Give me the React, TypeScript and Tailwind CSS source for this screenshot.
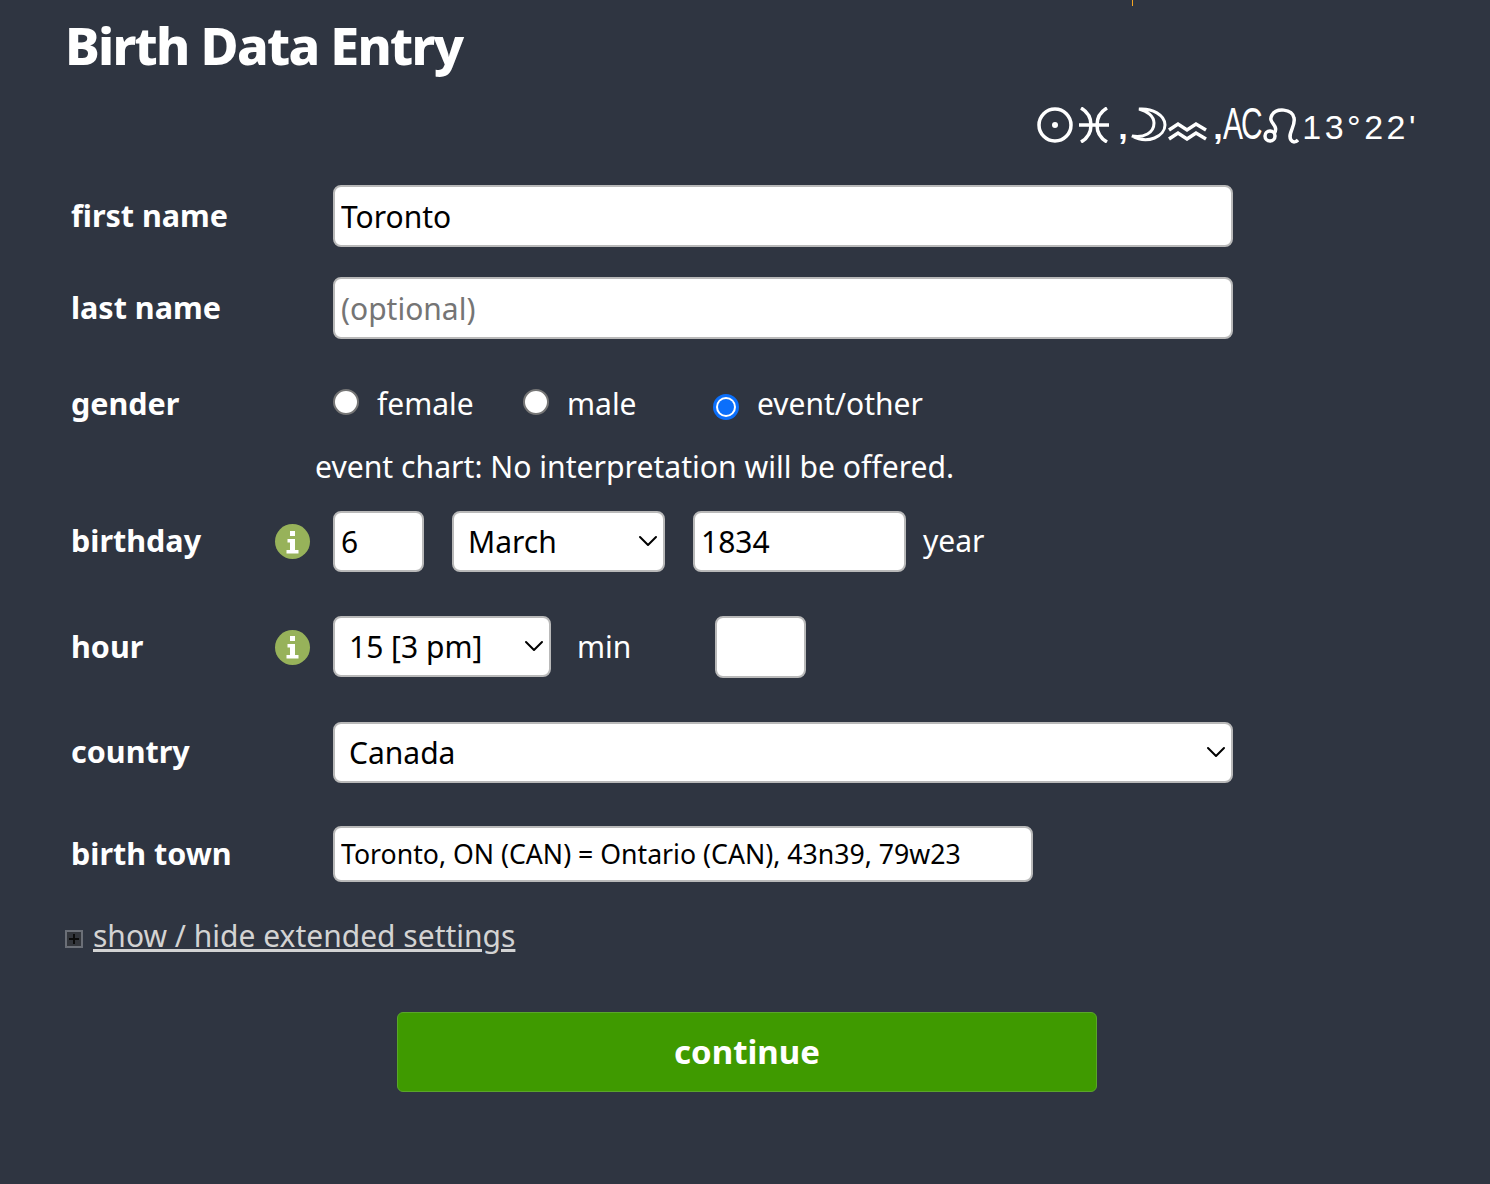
import React from 'react';
import { ChevronDown } from 'lucide-react';

const fieldClass =
  'rounded-[8px] border-2 border-[#b9b9b9] bg-white px-[6px] text-[30px] text-black outline-none placeholder:text-[#757575]';
const selectClass =
  'h-[61px] w-full appearance-none rounded-[8px] border-2 border-[#b9b9b9] bg-white pl-[14px] text-[30px] text-black outline-none';

const Label: React.FC<{ children: React.ReactNode; info?: boolean }> = ({ children, info }) => (
  <div className="flex w-[267px] shrink-0 items-center pl-[5px]">
    <span className="mb-[2px] w-[204px] text-[30.500px] font-bold leading-none text-white">{children}</span>
    {info && (
      <span className="flex h-[35px] w-[35px] items-center justify-center rounded-full bg-[#97b25a]">
        <svg width="14" height="24" viewBox="0 0 14 24" fill="#ffffff">
          <rect x="4" y="1" width="5" height="5" />
          <path d="M1.500 9H9v11h3.500v3.500H.5V20H4v-7.500H1.500z" />
        </svg>
      </span>
    )}
  </div>
);

const Select: React.FC<{ value: string; options: string[]; className: string }> = ({ value, options, className }) => (
  <div className={`relative ${className}`}>
    <select defaultValue={value} className={selectClass}>
      {options.map((o) => (
        <option key={o}>{o}</option>
      ))}
    </select>
    <ChevronDown className="pointer-events-none absolute right-px top-[14px] text-black" size={32} strokeWidth={1.5} />
  </div>
);

const Radio: React.FC<{ label: string; checked?: boolean; className: string }> = ({ label, checked, className }) => (
  <label className={`flex items-center ${className}`}>
    {checked ? (
      <span className="mt-[5px] flex h-[26px] w-[26px] items-center justify-center rounded-full bg-[#0b6ffb]">
        <span className="flex h-[20px] w-[20px] items-center justify-center rounded-full bg-white">
          <span className="h-[16px] w-[16px] rounded-full bg-[#0b6ffb]" />
        </span>
      </span>
    ) : (
      <span className="-mt-[5px] h-[26px] w-[26px] rounded-full border-2 border-[#767676] bg-white" />
    )}
    <span className="ml-[18px] text-[30px] leading-none text-white">{label}</span>
  </label>
);

export default function App() {
  return (
    <div className="relative min-h-[1184px] bg-[#2f3541] pl-[66px] font-['Noto_Sans',sans-serif]">
      <span className="absolute left-[1132px] top-0 h-[6px] w-px bg-[#f5a623]" />
      <h1 className="-ml-px pt-[10px] text-[52px] font-extrabold leading-[70px] tracking-[-1.700px] text-white">Birth Data Entry</h1>

      {/* chart summary */}
      <div className="mt-[22px] flex h-[50px] w-[1353px] items-center justify-end text-white">
        <svg className="mb-[4px]" width="36" height="36" viewBox="0 0 36 36" fill="none" stroke="#ffffff" strokeWidth="3.500">
          <circle cx="18" cy="18" r="16" />
          <circle cx="18" cy="18" r="3" fill="#ffffff" stroke="none" />
        </svg>
        <svg className="mb-[4px] ml-[6px]" width="30" height="36" viewBox="0 0 30 36" fill="none" stroke="#ffffff" strokeWidth="3.500">
          <path d="M2 1c7 4 10 10 10 17s-3 13-10 17M28 1c-7 4-10 10-10 17s3 13 10 17M0 18h30" />
        </svg>
        <span className="ml-[9px] w-[12px] font-['Liberation_Sans',sans-serif] text-[34px] font-bold leading-none">,</span>
        <svg className="mb-[4px]" width="37" height="37" viewBox="0 0 37 37" fill="none" stroke="#ffffff" strokeWidth="3">
          <path d="M9 2C22 1 35 8 35 18 35 29 18 38 2 29 14 31 24 26 24 16 24 9 17 4 9 2z" />
        </svg>
        <svg className="ml-px mt-[8px]" width="39" height="20" viewBox="0 0 39 20" fill="none" stroke="#ffffff" strokeWidth="3.500">
          <path d="M1 9l9-6 9 6 9-6 10 6M1 18l9-6 9 6 9-6 10 6" />
        </svg>
        <span className="ml-[6px] w-[10px] font-['Liberation_Sans',sans-serif] text-[34px] font-bold leading-none">,</span>
        <span className="mb-[6px] inline-block w-[40px] origin-left whitespace-nowrap font-['Liberation_Sans',sans-serif] text-[44px] leading-none tracking-[-3px] [transform:scaleX(0.68)]">AC</span>
        <svg className="mb-[4px]" width="36" height="37" viewBox="0 0 36 37" fill="none" stroke="#ffffff" strokeWidth="3.500">
          <circle cx="7" cy="29" r="5" />
          <path d="M11 27C17 18 4 16 9 8c4-7 20-7 22 3 2 8-7 16-3 22 2 3 5 2 7 0" />
        </svg>
        <span className="ml-[3px] font-['Liberation_Sans',sans-serif] text-[34px] leading-none tracking-[3.500px]">13°22'</span>
      </div>

      <form className="flex flex-col">
        <div className="mt-[33px] flex items-center">
          <Label>first name</Label>
          <input defaultValue="Toronto" className={`${fieldClass} h-[62px] w-[900px]`} />
        </div>

        <div className="mt-[30px] flex items-center">
          <Label>last name</Label>
          <input placeholder="(optional)" className={`${fieldClass} h-[62px] w-[900px]`} />
        </div>

        <div className="mt-[44px] flex h-[42px] items-center">
          <Label>gender</Label>
          <Radio label="female" className="w-[190px]" />
          <Radio label="male" className="w-[190px]" />
          <Radio label="event/other" checked className="w-[300px]" />
        </div>

        <p className="mt-[21px] pl-[249px] text-[30.150px] leading-[42px] text-white">
          event chart: No interpretation will be offered.
        </p>

        <div className="mt-[23px] flex items-center">
          <Label info>birthday</Label>
          <input defaultValue="6" className={`${fieldClass} h-[61px] w-[91px]`} />
          <Select value="March" options={['March']} className="ml-[28px] w-[213px]" />
          <input defaultValue="1834" className={`${fieldClass} ml-[28px] h-[61px] w-[213px]`} />
          <span className="mb-[2px] ml-[17px] text-[30px] text-white">year</span>
        </div>

        <div className="mt-[44px] flex items-center">
          <Label info>hour</Label>
          <Select value="15 [3 pm]" options={['15 [3 pm]']} className="-mt-px w-[218px]" />
          <span className="mb-[2px] ml-[26px] w-[138px] text-[30px] text-white">min</span>
          <input className={`${fieldClass} h-[62px] w-[91px]`} />
        </div>

        <div className="mt-[44px] flex items-center">
          <Label>country</Label>
          <Select value="Canada" options={['Canada']} className="w-[900px]" />
        </div>

        <div className="mt-[43px] flex items-center">
          <Label>birth town</Label>
          <input
            defaultValue="Toronto, ON (CAN) = Ontario (CAN), 43n39, 79w23"
            className="h-[56px] w-[700px] rounded-[8px] border-2 border-[#b9b9b9] bg-white px-[6px] text-[26.660px] text-black outline-none"
          />
        </div>

        <div className="mt-[33px] flex h-[42px] items-center">
          <span className="mt-[5px] flex h-[18px] w-[18px] -translate-x-px items-center justify-center border-2 border-[#6b6f77] bg-[#33363c]">
            <svg width="10" height="10" viewBox="0 0 10 10" stroke="#0c0c0c" strokeWidth="2">
              <path d="M5 0v10M0 5h10" />
            </svg>
          </span>
          <a href="#" className="ml-[9px] text-[30px] leading-[42px] text-[#d3d3d3] underline">
            show / hide extended settings
          </a>
        </div>

        <button
          type="button"
          className="ml-[331px] mt-[55px] h-[80px] w-[700px] rounded-[6px] border border-[#5aa52a] bg-[#3f9a00] text-[33px] font-bold text-white"
        >
          continue
        </button>
      </form>
    </div>
  );
}
